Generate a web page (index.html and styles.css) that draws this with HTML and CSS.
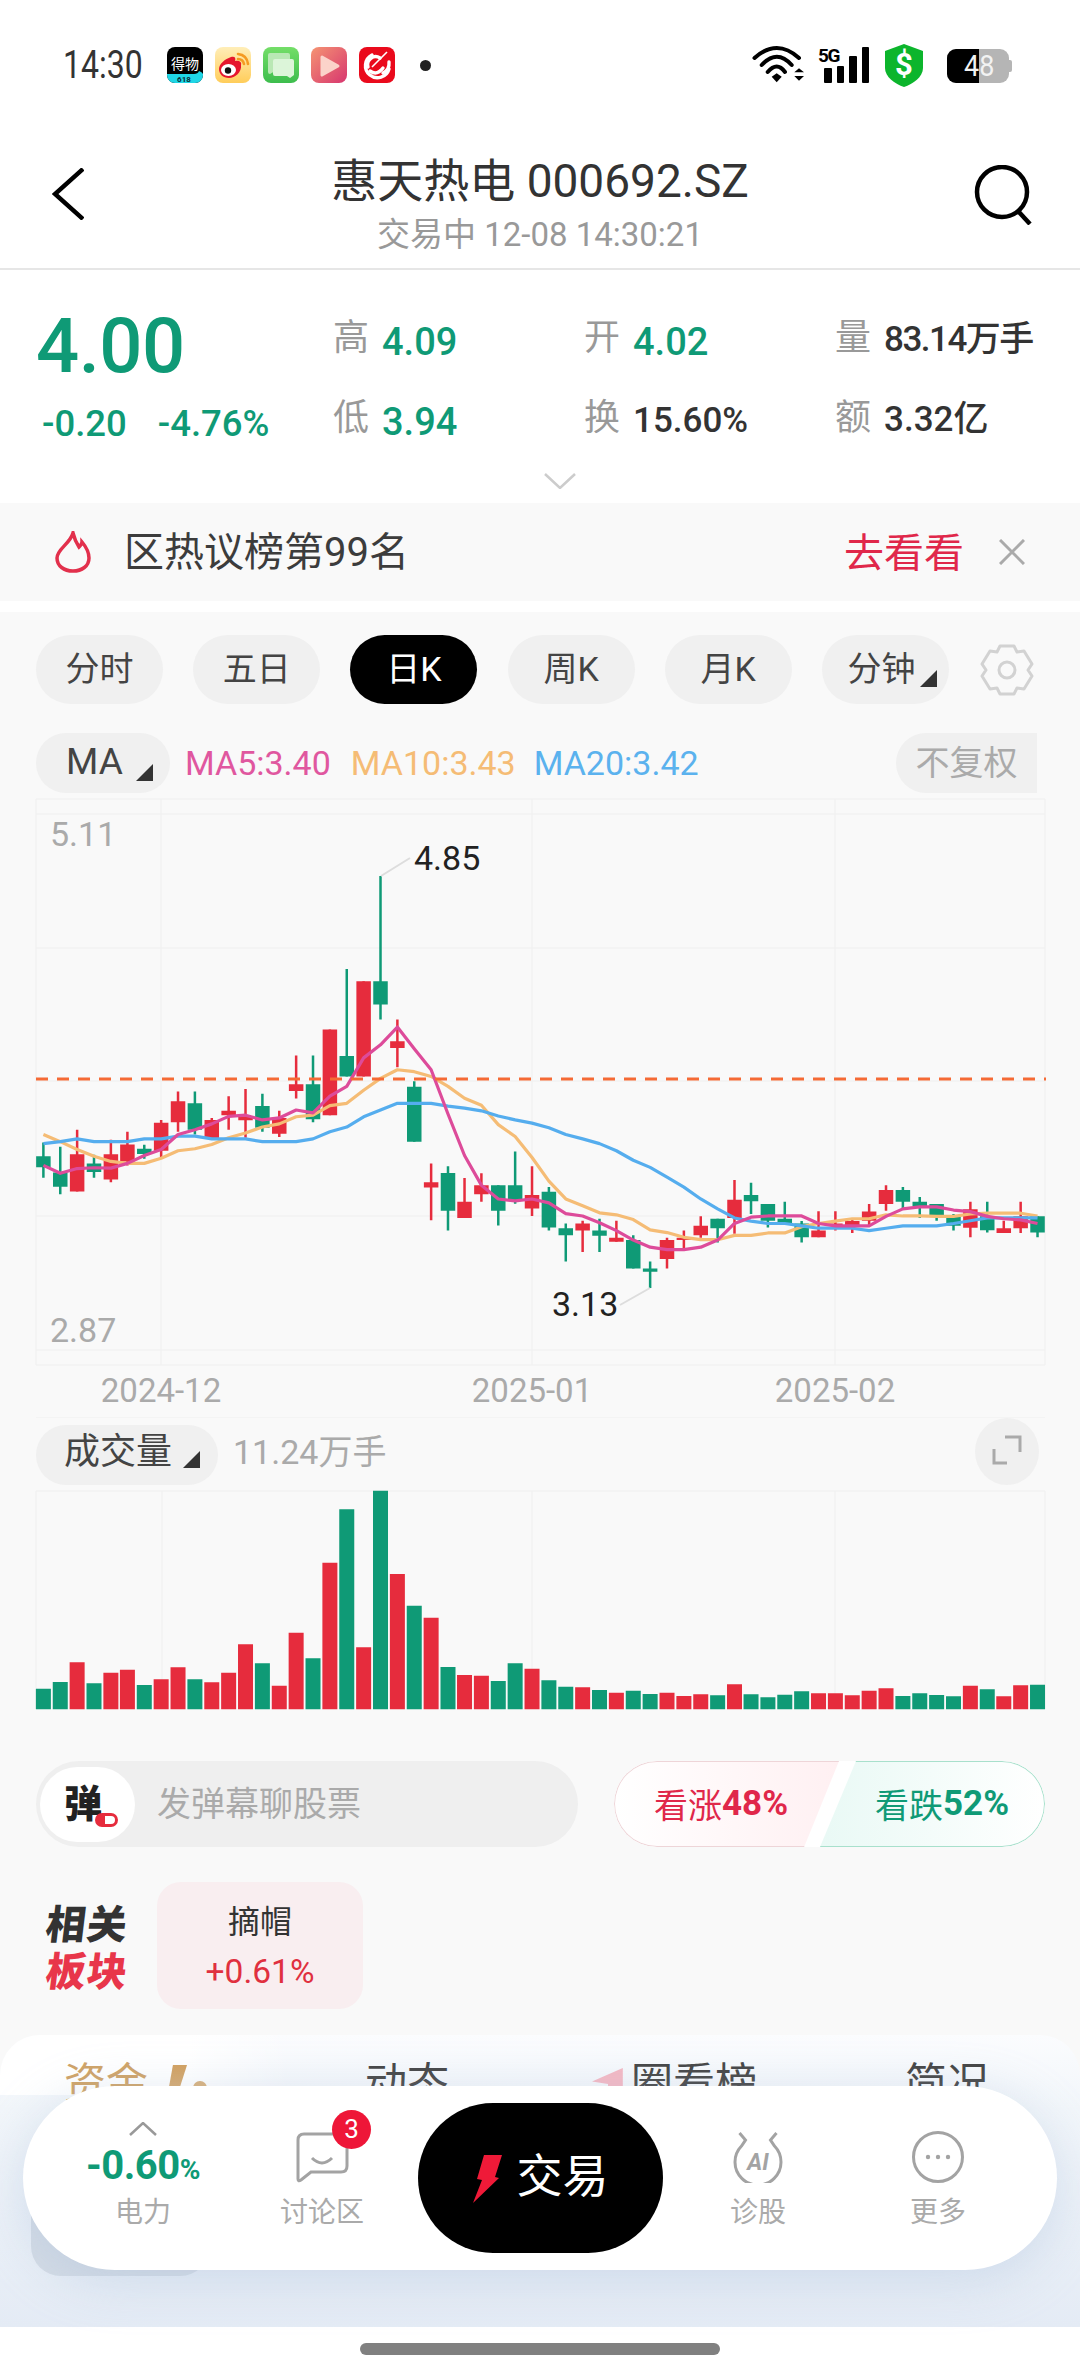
FILE: index.html
```html
<!DOCTYPE html>
<html lang="zh-CN">
<head>
<meta charset="utf-8">
<title>惠天热电</title>
<link rel="stylesheet" href="styles.css">
</head>
<body>
<div class="app">
  <div class="status">
    <span class="time">14:30</span>
    <div class="apps">
      <svg class="appicon" viewBox="0 0 36 36"><rect width="36" height="36" rx="8" fill="#000"/><path d="M0 27H27Q31 27 32 24Q35 25 36 27V28A8 8 0 0 1 28 36H8A8 8 0 0 1 0 28Z" fill="#1fd6e6"/><text x="18" y="22" class="t-dewu">得物</text><text x="17" y="34.5" class="t-618">618</text></svg>
      <svg class="appicon" viewBox="0 0 36 36"><defs><linearGradient id="gw" x1="0" y1="0" x2="0" y2="1"><stop offset="0" stop-color="#ffeeb8"/><stop offset="1" stop-color="#ffcd5a"/></linearGradient></defs><rect width="36" height="36" rx="8" fill="url(#gw)"/><path d="M4 22C4 17 10 12 16 10C20 9 21 11 20 14C24 13 27 15 26 18C27 25 20 31 14 31C8 31 4 27 4 22Z" fill="#e6162d"/><ellipse cx="13.5" cy="23" rx="7.5" ry="6" fill="#fff"/><circle cx="13" cy="23.5" r="3.2" fill="#111"/><path d="M23 7Q32 8 33 17M23 12Q28 12 29 17" class="st-orange"/></svg>
      <svg class="appicon" viewBox="0 0 36 36"><defs><linearGradient id="gm" x1="0" y1="0" x2="0" y2="1"><stop offset="0" stop-color="#74de68"/><stop offset="1" stop-color="#3dbd4d"/></linearGradient></defs><rect width="36" height="36" rx="8" fill="url(#gm)"/><path d="M7 6H25Q27 6 27 8V22Q27 24 25 24H12L7 27Q5 27 5 25V8Q5 6 7 6Z" fill="#b9e8b4"/><path d="M12 12H29Q31 12 31 14V28L27 31L24 29H12Q10 29 10 27V14Q10 12 12 12Z" fill="#dcf5d9"/></svg>
      <svg class="appicon" viewBox="0 0 36 36"><defs><linearGradient id="gv" x1="0" y1="0" x2="1" y2="1"><stop offset="0" stop-color="#f59473"/><stop offset="1" stop-color="#d7366f"/></linearGradient></defs><rect width="36" height="36" rx="8" fill="url(#gv)"/><path d="M11 10L27 19L11 28Z" class="st-play"/></svg>
      <svg class="appicon" viewBox="0 0 36 36"><rect width="36" height="36" rx="8" fill="#ea0a1c"/><path d="M13 8A12 12 0 1 0 30 22" class="st-swirl"/><path d="M21 11A8 8 0 0 0 9 20" class="st-swirl"/><path d="M24 26A11 11 0 0 0 30 15" class="st-swirl"/><path d="M11 24Q18 29 24 21" class="st-swirl"/><path d="M13 20L28 5" class="st-thin"/></svg>
      <span class="dot"></span>
    </div>
    <div class="sys">
      <svg class="wifi" viewBox="0 0 52 36"><path d="M1.5 11Q24 -9 46 11M8.7 18Q24 1.4 38.7 18M14.7 25Q24 14 32 25" class="st-wifi"/><path d="M18.7 29.7L23.7 26.3L28.7 29.7L23.7 35.3Z" class="blk"/><path d="M41.3 25.3L46 21.3L51 25.3ZM41.3 29L51 29L46 33.7Z" class="blk"/></svg>
      <svg class="signal" viewBox="0 -4 52 40"><text x="0" y="15" class="t-5g">5G</text><rect x="6" y="21" width="8" height="15" rx="1"/><rect x="19" y="19" width="7" height="17" rx="1"/><rect x="31" y="9" width="8" height="27" rx="1"/><rect x="44" y="0" width="7" height="36" rx="1"/></svg>
      <svg class="shield" viewBox="0 0 38 43"><path d="M19 0L38 7V24C38 33 28 40 19 43C10 40 0 33 0 24V7Z" fill="#0cb52c"/><text x="19" y="31" class="t-dollar">$</text></svg>
      <div class="battery"><div class="batbody"><span class="batfill"></span><span class="batnum">48</span></div><span class="batnub"></span></div>
    </div>
  </div>

  <header class="nav">
    <svg class="back" viewBox="0 0 32 52"><path d="M31 1L3 26L31 51" class="st-nav"/></svg>
    <div class="navtitle">
      <div class="stockname">惠天热电 000692.SZ</div>
      <div class="stocksub">交易中 12-08 14:30:21</div>
    </div>
    <svg class="search" viewBox="0 0 58 60"><circle cx="28" cy="27" r="25" class="st-nav"/><path d="M44 46L56 59" class="st-nav"/></svg>
  </header>

  <section class="quote">
    <div class="quote-main">
      <div class="price">
        <div class="bigprice">4.00</div>
        <div class="change"><span>-0.20</span><span>-4.76%</span></div>
      </div>
      <div class="stats">
        <div class="stat"><span class="k">高</span><span class="v green">4.09</span></div>
        <div class="stat"><span class="k">开</span><span class="v green">4.02</span></div>
        <div class="stat"><span class="k">量</span><span class="v cjk wide">83.14万手</span></div>
        <div class="stat"><span class="k">低</span><span class="v green">3.94</span></div>
        <div class="stat"><span class="k">换</span><span class="v pct">15.60%</span></div>
        <div class="stat"><span class="k">额</span><span class="v cjk">3.32亿</span></div>
      </div>
    </div>
    <svg class="expand-chev" viewBox="0 0 32 16"><path d="M1 1L16 15L31 1" class="st-chev"/></svg>
  </section>

  <section class="notice">
    <svg class="flame" viewBox="0 0 36 42"><path d="M18 2C20 10 22 13 24 16C26 14 27 12 27 11C32 17 34 22 34 27C34 35 27 40 18 40C9 40 2 35 2 27C2 18 15 13 18 2Z" class="st-flame"/></svg>
    <span class="notice-text">区热议榜第99名</span>
    <span class="notice-link">去看看</span>
    <svg class="close" viewBox="0 0 26 26"><path d="M1 1L25 25M25 1L1 25" class="st-close"/></svg>
  </section>

  <main class="main">
    <div class="tabs">
      <span class="tab">分时</span>
      <span class="tab">五日</span>
      <span class="tab active">日K</span>
      <span class="tab">周K</span>
      <span class="tab">月K</span>
      <span class="tab tab-more">分钟<i class="tri tri-tab"></i></span>
      <svg class="gear" viewBox="0 0 54 52"><path d="M20 2L34 2L37 8L44 7L52 20L48 26L52 32L44 45L37 44L34 50L20 50L17 44L10 45L2 32L6 26L2 20L10 7L17 8Z" class="st-gear"/><circle cx="27" cy="26" r="8" class="st-gear"/></svg>
    </div>

    <div class="mabar">
      <span class="pill ma-pill">MA<i class="tri"></i></span>
      <span class="ma ma5">MA5:3.40</span>
      <span class="ma ma10">MA10:3.43</span>
      <span class="ma ma20">MA20:3.42</span>
      <span class="fq">不复权</span>
    </div>

    <svg class="kline" viewBox="0 795 1080 623">
      <path class="grid" d="M36 799H1045M36 814H1045M36 948H1045M36 1081H1045M36 1216H1045M36 1350H1045M36 1365H1045M36 799V1365M161 799V1365M532 799V1365M835 799V1365M1045 799V1365M36 1418H1045"/>
      <g transform="translate(0,780) scale(0.34435,0.39526)">
        <path class="wick c-g" d="M126 917V1006M175 928V1048M273 948V1006M419 923V958M566 788V897M762 794V890M909 697V866M1007 478V750M1105 243V606M1203 762V915M1301 977V1140M1447 1025V1127M1496 940V1072M1594 1030V1140M1643 1122V1218M1741 1110V1194M1839 1152V1236M1888 1218V1285M2084 1110V1170M2181 1019V1098M2230 1073V1132M2279 1067V1122M2328 1116V1170M2622 1030V1086M2671 1055V1108M2720 1073V1115M2769 1098V1140M2867 1067V1145M3013 1104V1157"/>
        <path class="body c-g" d="M126 952V980M175 993V1029M273 970V992M419 933V946M566 818V885M762 825V880M909 770V858M1007 698V750M1105 509V568M1203 776V915M1301 994V1090M1447 1025V1090M1496 1025V1065M1594 1042V1132M1643 1134V1152M1741 1140V1153M1839 1164V1236M1888 1236V1244M2084 1110V1134M2181 1050V1066M2230 1073V1115M2279 1110V1122M2328 1122V1157M2622 1037V1067M2671 1067V1078M2720 1073V1104M2769 1104V1128M2867 1104V1139M3013 1104V1145"/>
        <path class="wick c-r" d="M224 885V1041M322 910V1018M370 890V975M468 860V955M517 788V890M615 855V907M664 800V885M713 782V905M811 837V903M860 697V806M958 631V848M1056 509V750M1154 606V727M1252 970V1114M1349 1007V1108M1398 995V1067M1545 977V1103M1692 1115V1194M1790 1115V1168M1937 1158V1236M1986 1140V1188M2035 1104V1158M2133 1012V1148M2377 1091V1157M2426 1091V1140M2475 1110V1146M2524 1073V1128M2573 1025V1090M2818 1067V1157M2915 1115V1146M2964 1067V1146"/>
        <path class="body c-r" d="M224 947V1041M322 947V1011M370 922V965M468 867V938M517 813V866M615 860V907M664 837V848M713 851V861M811 855V895M860 770V787M958 631V848M1056 509V750M1154 661V678M1252 1018V1031M1349 1067V1108M1398 1025V1048M1545 1050V1084M1692 1122V1140M1790 1158V1168M1937 1164V1212M1986 1158V1164M2035 1128V1152M2133 1062V1108M2377 1140V1157M2426 1122V1128M2475 1116V1128M2524 1092V1115M2573 1037V1073M2818 1086V1133M2915 1134V1146M2964 1104V1134"/>
        <polyline class="line l-10" points="126,897 175,915 224,935 273,952 322,965 370,970 419,970 468,957 517,938 566,933 615,922 664,905 713,893 762,878 811,870 860,852 909,848 958,824 1007,818 1056,785 1105,755 1154,733 1203,738 1252,750 1301,775 1349,805 1398,823 1447,872 1496,902 1545,955 1594,1015 1643,1060 1692,1077 1741,1095 1790,1100 1839,1112 1888,1138 1937,1145 1986,1157 2035,1163 2084,1163 2133,1152 2181,1152 2230,1146 2279,1146 2328,1130 2377,1122 2426,1116 2475,1110 2524,1110 2573,1100 2622,1103 2671,1103 2720,1104 2769,1104 2818,1098 2867,1096 2915,1096 2964,1096 3013,1103"/>
        <polyline class="line l-20" points="126,920 175,915 224,908 273,915 322,915 370,915 419,908 468,908 517,901 566,901 615,908 664,908 713,908 762,915 811,915 860,915 909,908 958,890 1007,878 1056,852 1105,835 1154,818 1203,818 1252,818 1301,825 1349,830 1398,837 1447,850 1496,860 1545,868 1594,880 1643,897 1692,908 1741,920 1790,938 1839,962 1888,980 1937,1005 1986,1030 2035,1060 2084,1085 2133,1108 2181,1116 2230,1122 2279,1122 2328,1128 2377,1134 2426,1134 2475,1134 2524,1140 2573,1134 2622,1128 2671,1128 2720,1128 2769,1122 2818,1115 2867,1108 2915,1108 2964,1108 3013,1108"/>
        <polyline class="line l-5" points="126,975 175,995 224,983 273,981 322,982 370,970 419,950 468,935 517,897 566,885 615,870 664,851 713,848 762,860 811,855 860,835 909,842 958,800 1007,775 1056,703 1105,670 1154,625 1203,680 1252,733 1301,845 1349,950 1398,1025 1447,1060 1496,1065 1545,1060 1594,1070 1643,1097 1692,1103 1741,1120 1790,1140 1839,1164 1888,1182 1937,1188 1986,1188 2035,1182 2084,1164 2133,1122 2181,1106 2230,1103 2279,1103 2328,1103 2377,1122 2426,1128 2475,1128 2524,1128 2573,1104 2622,1085 2671,1080 2720,1080 2769,1088 2818,1092 2867,1104 2915,1110 2964,1113 3013,1122"/>
      </g>
      <path class="dash" d="M36 1079H1046"/>
      <path class="lead" d="M381 876L410 858M650 1288L620 1305"/>
      <text x="50" y="846" class="axis">5.11</text>
      <text x="50" y="1342" class="axis">2.87</text>
      <text x="414" y="870" class="ext">4.85</text>
      <text x="552" y="1316" class="ext">3.13</text>
      <text x="161" y="1402" class="axis mid">2024-12</text>
      <text x="532" y="1402" class="axis mid">2025-01</text>
      <text x="835" y="1402" class="axis mid">2025-02</text>
    </svg>

    <div class="volbar">
      <span class="pill vol-pill"><span class="lift">成交量</span><i class="tri tri-vol"></i></span>
      <span class="vol-val">11.24万手</span>
      <span class="fullscreen"><svg viewBox="0 0 30 30"><path d="M13 2H28V17M2 14V28H15" class="st-full"/></svg></span>
    </div>

    <svg class="volchart" viewBox="0 1485 1080 230">
      <path class="grid" d="M36 1491H1045M36 1491V1709M162 1491V1709M532 1491V1709M835 1491V1709M1045 1491V1709"/>
      <g transform="translate(0,1400) scale(0.34435,0.33333)">
        <path class="bar c-g" d="M126 866V928M175 846V928M273 850V928M419 855V928M566 838V928M762 790V928M909 775V928M1007 328V928M1105 272V928M1203 617V928M1301 801V928M1447 843V928M1496 790V928M1594 841V928M1643 860V928M1741 870V928M1839 872V928M1888 882V928M2084 886V928M2181 883V928M2230 892V928M2279 884V928M2328 874V928M2622 888V928M2671 880V928M2720 885V928M2769 889V928M2867 868V928M3013 854V928"/>
        <path class="bar c-r" d="M224 787V928M322 818V928M370 809V928M468 838V928M517 802V928M615 847V928M664 818V928M713 733V928M811 857V928M860 698V928M958 488V928M1056 742V928M1154 522V928M1252 653V928M1349 825V928M1398 827V928M1545 806V928M1692 862V928M1790 878V928M1937 878V928M1986 888V928M2035 883V928M2133 853V928M2377 880V928M2426 880V928M2475 886V928M2524 872V928M2573 865V928M2818 857V928M2915 889V928M2964 856V928"/>
      </g>
    </svg>

    <div class="actions">
      <div class="danmu">
        <span class="danmu-logo">弹<i class="danmu-dot"></i></span>
        <span class="danmu-text">发弹幕聊股票</span>
      </div>
      <div class="vote">
        <div class="vote-up"><span>看涨</span><b>48%</b></div>
        <div class="vote-down"><span>看跌</span><b>52%</b></div>
      </div>
    </div>

    <div class="related">
      <div class="related-title"><span>相关</span><span class="red">板块</span></div>
      <div class="tile"><span class="tile-name">摘帽</span><span class="tile-val">+0.61%</span></div>
    </div>

    <div class="panel">
      <div class="panel-tabs">
        <span class="ptab ptab-gold">资金<i class="bolt-gold"></i></span>
        <span class="ptab">动态</span>
        <span class="ptab"><i class="pink-mark"></i>圈看榜</span>
        <span class="ptab">简况</span>
      </div>
      <span class="under-btn"></span>
      <nav class="dock">
        <div class="dock-item">
          <svg class="up-chev" viewBox="0 0 28 14"><path d="M1 13L14 1L27 13" class="st-upchev"/></svg>
          <div class="dock-val">-0.60<small>%</small></div>
          <span class="dock-label">电力</span>
        </div>
        <div class="dock-item dock-chat">
          <svg class="dock-icon" viewBox="0 0 54 52"><path d="M40 3H9Q3 3 3 9V48Q3 51 6 49L16 41H46Q52 41 52 35V16" class="st-dock"/><path d="M17 27Q27 37 37 27" class="st-dock"/></svg>
          <span class="badge">3</span>
          <span class="dock-label">讨论区</span>
        </div>
        <button class="trade">
          <svg class="bolt" viewBox="0 0 30 48"><path d="M11 0L29 0L22 22L26 23L0 48L9 25L4 24Z" fill="#ef1a38"/></svg>
          <span>交易</span>
        </button>
        <div class="dock-item">
          <svg class="dock-icon" viewBox="0 0 54 52"><path d="M8.5 2L14.5 9L10.5 15A23 23 0 1 0 43.5 15L39.5 9L45.5 2" class="st-dock"/><text x="27" y="39" class="t-ai">AI</text></svg>
          <span class="dock-label">诊股</span>
        </div>
        <div class="dock-item">
          <svg class="dock-icon" viewBox="0 0 54 52"><circle cx="27" cy="26" r="24.5" class="st-dock"/><circle cx="17" cy="26" r="2.2" class="dots"/><circle cx="27" cy="26" r="2.2" class="dots"/><circle cx="37" cy="26" r="2.2" class="dots"/></svg>
          <span class="dock-label">更多</span>
        </div>
      </nav>
    </div>
  </main>

  <footer class="homebar"><span class="indicator"></span></footer>
</div>
</body>
</html>
```
FILE: styles.css
```css
* { box-sizing: border-box; }
html, body { margin: 0; padding: 0; background: #fff; }
body { font-family: Roboto, "Noto Sans CJK SC", sans-serif; color: #333; }
.app { width: 1080px; height: 2376px; overflow: hidden; display: flex; flex-direction: column; background: #fff; }
i { display: block; font-style: normal; }

/* status bar */
.status { height: 130px; padding: 43px 68px 0 63px; display: flex; align-items: flex-start; }
.time { font-size: 32px; line-height: 40px; color: #333; width: 104px; transform: scaleY(1.2); transform-origin: 0 50%; margin-top: 2px; }
.apps { display: flex; align-items: center; gap: 12px; height: 44px; }
.appicon { width: 36px; height: 36px; display: block; }
.dot { width: 11px; height: 11px; border-radius: 50%; background: #222; margin-left: 13px; }
.sys { margin-left: auto; display: flex; align-items: flex-start; height: 44px; }
.wifi { width: 52px; height: 36px; margin: 4px 13px 0 0; overflow: visible; }
.signal { width: 52px; height: 40px; margin-right: 15px; }
.shield { width: 38px; height: 43px; margin: 1px 24px 0 0; }
.battery { display: flex; align-items: center; width: 65px; height: 34px; margin-top: 6px; }
.batbody { position: relative; width: 62px; height: 34px; border-radius: 9px; background: #b5b5b5; overflow: hidden; }
.batfill { display: block; width: 32px; height: 34px; background: #000; }
.batnum { position: absolute; left: 17px; top: 0; font-size: 27px; line-height: 34px; color: #f2f2f2; transform: scaleY(1.12); }
.batnub { width: 3px; height: 12px; border-radius: 0 2px 2px 0; background: #b5b5b5; }
.t-dewu { font-size: 14px; fill: #fff; text-anchor: middle; font-family: "Noto Sans CJK SC", sans-serif; }
.t-618 { font-size: 8px; fill: #0b2c33; text-anchor: middle; font-weight: 700; }
.t-5g { font-size: 19px; font-weight: 700; fill: #000; letter-spacing: -1.5px; }
.signal rect, .blk { fill: #000; }
.t-dollar { font-size: 31px; font-weight: 700; fill: #fff; text-anchor: middle; }
.st-orange { fill: none; stroke: #f59a22; stroke-width: 2.6; stroke-linecap: round; }
.st-swirl { fill: none; stroke: #fff; stroke-width: 3.4; stroke-linecap: round; }
.st-thin { fill: none; stroke: #fff; stroke-width: 1.6; }
.st-play { fill: #fbd3ca; stroke: #fbd3ca; stroke-width: 3; stroke-linejoin: round; }
.st-wifi { fill: none; stroke: #000; stroke-width: 4; stroke-linecap: round; }

/* nav */
.nav { height: 140px; border-bottom: 2px solid #e6e6e6; display: flex; align-items: flex-start; padding: 30px 48px 0 52px; position: relative; }
.back { width: 32px; height: 52px; margin-top: 8px; flex: none; }
.search { width: 58px; height: 60px; margin-left: auto; margin-top: 5px; flex: none; }
.st-nav { fill: none; stroke: #000; stroke-width: 4.5; }
.navtitle { position: absolute; left: 0; right: 0; top: 23px; text-align: center; }
.stockname { font-size: 46px; line-height: 56px; color: #333; }
.stocksub { font-size: 33px; line-height: 40px; color: #999; margin-top: 6px; }

/* quote */
.quote { height: 233px; padding: 27px 0 0 36px; display: flex; flex-direction: column; }
.quote-main { display: flex; }
.price { width: 297px; color: #0f9a76; }
.bigprice { font-size: 76px; line-height: 84px; font-weight: 500; margin-top: 7px; letter-spacing: -.5px; }
.change { display: flex; gap: 31px; font-size: 36.5px; line-height: 44px; margin-top: 14px; padding-left: 6px; font-weight: 500; }
.stats { display: grid; grid-template-columns: 251px 251px auto; grid-auto-rows: 80px; }
.stat { display: flex; align-items: center; gap: 13px; }
.k { font-size: 36px; color: #999; padding-bottom: 6px; }
.v { font-size: 35px; color: #333; font-weight: 500; }
.v.green { color: #0f9a76; font-size: 38px; padding-top: 9px; }
.v.pct { padding-top: 6px; }
.v.cjk { padding-bottom: 3px; }
.v.wide { letter-spacing: -1.5px; }
.expand-chev { width: 32px; height: 16px; align-self: flex-start; margin: 16px 0 0 508px; }
.st-chev { fill: none; stroke: #ccc; stroke-width: 2.5; }

/* notice */
.notice { height: 98px; background: #f9f9f9; display: flex; align-items: center; padding: 0 55px 0 55px; margin-bottom: 11px; }
.flame { width: 36px; height: 42px; margin-right: 33px; }
.st-flame { fill: none; stroke: #e2304c; stroke-width: 3.5; }
.notice-text { font-size: 40px; color: #3c3c3c; padding-bottom: 7px; }
.notice-link { font-size: 40px; color: #e0274a; margin-left: auto; padding-bottom: 5px; }
.close { width: 26px; height: 26px; margin-left: 35px; }
.st-close { fill: none; stroke: #aaa; stroke-width: 3; }

/* main */
.main { flex: 1; background: #f9f9f9; display: flex; flex-direction: column; padding-top: 23px; min-height: 0; }
.tabs { display: flex; align-items: center; gap: 30.2px; padding-left: 36px; height: 69px; }
.tab { position: relative; width: 127px; height: 69px; border-radius: 35px; background: #f0f0f0; font-size: 34px; line-height: 69px; text-align: center; color: #444; }
.tab.active { background: #000; color: #fff; }
.tab-more { padding-right: 8px; }
.tri { position: absolute; right: 17px; bottom: 12px; width: 0; height: 0; border-left: 17px solid transparent; border-bottom: 17px solid #333; }
.tri-tab { right: 12px; bottom: 17px; }
.tri-vol { right: 18px; bottom: 17px; }
.gear { width: 54px; height: 52px; margin-left: 1px; }
.st-gear { fill: none; stroke: #d2d2d2; stroke-width: 3; stroke-linejoin: round; }

.mabar { display: flex; align-items: center; height: 60px; margin-top: 29px; padding: 0 43px 0 36px; }
.pill { position: relative; display: block; height: 60px; border-radius: 30px; background: #f0f0f0; font-size: 37px; line-height: 58px; color: #444; flex: none; }
.ma-pill { width: 134px; padding-left: 30px; }
.ma { font-size: 34px; }
.ma5 { color: #e0579f; margin-left: 15px; }
.ma10 { color: #f5bc75; margin-left: 20px; }
.ma20 { color: #5bb2ee; margin-left: 18px; }
.fq { margin-left: auto; width: 141px; height: 60px; line-height: 60px; background: #f0f0f0; border-radius: 30px 0 0 30px; text-align: center; font-size: 34px; color: #aaa; }

/* charts */
.kline { display: block; width: 1080px; height: 623px; margin-top: 2px; flex: none; }
.volchart { display: block; width: 1080px; height: 230px; flex: none; }
.grid { fill: none; stroke: #f2f2f2; stroke-width: 1.5; }
.wick { fill: none; stroke-width: 2.5; vector-effect: non-scaling-stroke; }
.body { fill: none; stroke-width: 14.5; vector-effect: non-scaling-stroke; }
.bar { fill: none; stroke-width: 15; vector-effect: non-scaling-stroke; }
.c-g { stroke: #0f9a76; }
.c-r { stroke: #e62c3d; }
.line { fill: none; stroke-width: 3.2; vector-effect: non-scaling-stroke; stroke-linejoin: round; }
.l-5 { stroke: #dd4b9a; }
.l-10 { stroke: #f5bc75; }
.l-20 { stroke: #55adee; }
.dash { stroke: #f56a35; stroke-width: 3; stroke-dasharray: 12 9; fill: none; }
.lead { stroke: #ddd; stroke-width: 2; fill: none; }
.axis { font-size: 34px; fill: #aaa; font-family: Roboto, sans-serif; }
.axis.mid { text-anchor: middle; font-size: 33px; }
.ext { font-size: 34px; fill: #222; font-family: Roboto, sans-serif; }

.volbar { display: flex; align-items: flex-end; height: 67px; padding: 0 41px 0 36px; flex: none; }
.vol-pill { width: 182px; padding-left: 28px; font-size: 36px; line-height: 60px; }
.lift { display: block; height: 56px; line-height: 54px; }
.vol-val { font-size: 34px; color: #aaa; margin-left: 15px; line-height: 54px; height: 60px; }
.fullscreen { margin-left: auto; width: 64px; height: 67px; border-radius: 50%; background: #f0f0f0; display: flex; align-items: center; justify-content: center; padding-bottom: 3px; }
.fullscreen svg { width: 30px; height: 30px; }
.st-full { fill: none; stroke: #aaa; stroke-width: 3; }

/* actions */
.actions { display: flex; justify-content: space-between; padding: 0 35px 0 36px; margin-top: 46px; flex: none; }
.danmu { width: 542px; height: 86px; border-radius: 43px; background: #efefef; display: flex; align-items: center; padding-left: 4px; }
.danmu-logo { position: relative; width: 95px; height: 75px; border-radius: 38px; background: #fff; font-size: 38px; font-weight: 900; line-height: 75px; color: #222; padding-left: 24px; }
.danmu-dot { position: absolute; left: 55px; top: 46px; width: 23px; height: 14px; border-radius: 7px; background: #fff; border: 3px solid #e62c3d; border-left-width: 10px; }
.danmu-text { font-size: 34px; color: #aaa; margin-left: 22px; padding-bottom: 6px; }
.vote { position: relative; width: 431px; height: 86px; border-radius: 43px; display: flex; overflow: hidden; background: #fff; }
.vote-up, .vote-down { height: 86px; display: flex; align-items: center; font-size: 34px; padding-bottom: 2px; }
.vote-up { width: 225px; padding-left: 39px; color: #e0274a; background: linear-gradient(90deg, #fff, #fff0f2); border: 1px solid #eed5d8; border-right: 0; border-radius: 43px 0 0 43px; clip-path: polygon(0 0, 100% 0, 84.5% 100%, 0 100%); }
.vote-down { flex: 1; margin-left: -19px; padding-left: 55px; color: #0f9a76; background: linear-gradient(90deg, #e9f9f5, #fff); border: 1px solid #a8e0cc; border-left: 0; border-radius: 0 43px 43px 0; clip-path: polygon(16% 0, 100% 0, 100% 100%, 0 100%); }
.vote b { font-weight: 700; font-size: 35px; }

.related { display: flex; align-items: center; margin-top: 35px; padding-left: 46px; height: 127px; flex: none; }
.related-title { width: 111px; display: flex; flex-direction: column; font-size: 40px; line-height: 47px; font-weight: 900; color: #333; padding-top: 6px; letter-spacing: 1px; }
.related-title span { display: block; transform: skewX(-7deg); }
.related-title .red { color: #e8364a; }
.tile { width: 206px; height: 127px; border-radius: 24px; background: #f9eef0; display: flex; flex-direction: column; align-items: center; justify-content: center; gap: 6px; }
.tile-name { font-size: 32px; line-height: 46px; color: #333; }
.tile-val { font-size: 33.5px; line-height: 42px; color: #e0303f; }

/* bottom panel */
.panel { position: relative; flex: 1; margin-top: 26px; border-radius: 40px 40px 0 0; background: linear-gradient(180deg, #fbfcfe 0, #f2f6fa 25%, #e4ebf5 100%); }
.panel::before { content: ""; position: absolute; left: 0; top: 0; width: 290px; height: 60px; border-radius: 40px 0 0 0; background: linear-gradient(90deg, #fff 65%, rgba(255, 255, 255, 0)); }
.panel-tabs { position: relative; height: 51px; font-size: 42px; line-height: 50px; color: #444; }
.ptab { position: absolute; top: 24px; white-space: nowrap; }
.ptab:nth-child(1) { left: 64px; }
.ptab:nth-child(2) { left: 365px; }
.ptab:nth-child(3) { left: 592px; }
.ptab:nth-child(4) { left: 905px; }
.ptab-gold { color: #cfa367; }
.bolt-gold { position: relative; display: inline-block; width: 22px; height: 50px; margin-left: 17px; vertical-align: top; background: linear-gradient(180deg, #d19e5c, #d8b07a); clip-path: polygon(36% 12%, 100% 12%, 36% 100%, 0 100%); }
.ptab-gold::after { content: ""; display: inline-block; width: 14px; height: 14px; margin: 22px 0 0 6px; border-radius: 50%; background: #d8b07a; vertical-align: top; }
.pink-mark { display: inline-block; width: 39px; height: 50px; vertical-align: top; background: #f5b8c3; clip-path: polygon(79% 18%, 79% 100%, 41% 100%, 41% 50%, 0 45%); }
.under-btn { position: absolute; left: 31px; top: 150px; width: 179px; height: 91px; border-radius: 0 0 30px 30px; background: #d3dbe5; }
.dock { position: absolute; left: 23px; top: 51px; width: 1034px; height: 184px; border-radius: 92px; background: #fff; box-shadow: 0 10px 50px rgba(170, 190, 220, .42); }
.dock-item { position: absolute; top: 0; width: 120px; height: 184px; display: flex; flex-direction: column; align-items: center; }
.dock-item:nth-child(1) { left: 60px; }
.dock-item:nth-child(2) { left: 239px; }
.dock-item:nth-child(4) { left: 675px; }
.dock-item:nth-child(5) { left: 855px; }
.up-chev { width: 28px; height: 14px; margin-top: 36px; }
.st-upchev { fill: none; stroke: #999; stroke-width: 2.5; }
.dock-val { font-size: 40px; line-height: 44px; font-weight: 700; color: #0f9a76; margin-top: 8px; white-space: nowrap; letter-spacing: -.5px; }
.dock-val small { font-size: 28px; }
.dock-label { font-size: 28px; line-height: 36px; color: #aaa; position: absolute; top: 109px; white-space: nowrap; }
.dock-icon { width: 54px; height: 52px; margin-top: 45px; }
.st-dock { fill: none; stroke: #a3a3a3; stroke-width: 3; }
.dots { fill: #a3a3a3; }
.t-ai { font-size: 23px; font-weight: 700; font-style: italic; fill: #a3a3a3; text-anchor: middle; }
.badge { position: absolute; left: 70px; top: 24px; width: 39px; height: 39px; border-radius: 50%; background: #ee1638; color: #fff; font-size: 26px; line-height: 39px; text-align: center; }
.trade { position: absolute; left: 395px; top: 17px; width: 245px; height: 150px; border: 0; border-radius: 75px; background: #000; color: #fff; font-family: "Noto Sans CJK SC", sans-serif; font-size: 46px; display: flex; align-items: center; justify-content: center; gap: 14px; padding: 0 0 12px 0; }
.bolt { width: 30px; height: 48px; margin-top: 14px; }

.homebar { height: 49px; background: #fff; display: flex; justify-content: center; padding-top: 16px; flex: none; }
.indicator { width: 360px; height: 12px; border-radius: 6px; background: #808080; }
```
